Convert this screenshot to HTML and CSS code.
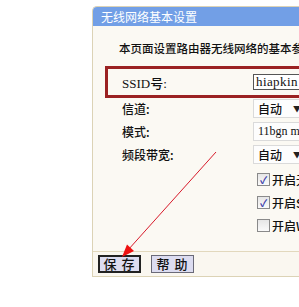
FILE: index.html
```html
<!DOCTYPE html>
<html>
<head>
<meta charset="utf-8">
<link rel="stylesheet" href="styles.css">
</head>
<body>
<div class="panel">
  <div class="hd">无线网络基本设置</div>
  <div class="bd">
    <p class="intro">本页面设置路由器无线网络的基本参数以及安全认证选项。</p>
    <div class="ssid">
      <span class="lbl ser">SSID号:</span>
      <span class="input ser">hiapkin</span>
    </div>
    <div class="rows">
      <div class="row"><span class="lbl">信道:</span><span class="sel">自动<i class="caret">▼</i></span></div>
      <div class="row"><span class="lbl">模式:</span><span class="sel wide ser">11bgn mixed<i class="caret">▼</i></span></div>
      <div class="row"><span class="lbl">频段带宽:</span><span class="sel">自动<i class="caret">▼</i></span></div>
    </div>
    <div class="checks">
      <div class="chk"><span class="box on">✓</span>开启无线功能</div>
      <div class="chk"><span class="box on">✓</span>开启SSID广播</div>
      <div class="chk"><span class="box"></span>开启WDS</div>
    </div>
  </div>
  <div class="ft">
    <button class="btn focus">保 存</button>
    <button class="btn">帮 助</button>
  </div>
</div>
<svg class="arrow" width="299" height="307" viewBox="0 0 299 307">
  <line x1="216" y1="152" x2="128" y2="250" stroke="#d81a2a" stroke-width="1"/>
  <polygon points="122,257 134,251 127,244.5" fill="#ee1111"/>
</svg>
</body>
</html>
```

FILE: styles.css
```css
html, body {
  margin: 0;
  padding: 0;
  width: 299px;
  height: 307px;
  overflow: hidden;
  background: #ffffff;
}
body {
  position: relative;
  box-sizing: border-box;
  padding-top: 6px;
  font-family: "Noto Sans CJK SC", sans-serif;
  font-size: 12px;
  font-weight: 500;
  color: #111;
}
.ser {
  font-family: "Liberation Serif", "Noto Sans CJK SC", serif;
}
.panel {
  margin-left: 92px;
  width: 320px;
  border: 1px solid #dcd3b6;
  border-right: none;
  border-radius: 5px 0 0 0;
  background: #fbf9f3;
}
.hd {
  height: 19px;
  line-height: 19px;
  padding-left: 8px;
  color: #fff;
  font-weight: 400;
  background: #729fe6;
  border-radius: 4px 0 0 0;
  white-space: nowrap;
}
.bd {
  padding-bottom: 14px;
}
.intro {
  margin: 14px 0 0 0;
  padding-left: 26px;
  line-height: 16px;
  height: 16px;
  white-space: nowrap;
  font-size: 11.5px;
}
.ssid {
  margin: 10px 0 0 12px;
  height: 26px;
  border: 3px solid #9b2222;
  display: flex;
  align-items: center;
  padding-left: 14px;
  white-space: nowrap;
}
.ssid .lbl {
  width: 131px;
  font-size: 13px;
}
.input {
  height: 14px;
  line-height: 14px;
  width: 80px;
  border: 1px solid #555;
  border-right: none;
  background: #fff;
  padding-left: 2px;
  font-size: 13px;
  letter-spacing: 0.4px;
  font-weight: 400;
  color: #111;
}
.rows {
  margin-top: -1px;
  padding-left: 29px;
}
.row {
  height: 23px;
  display: grid;
  grid-template-columns: 131px auto;
  align-items: center;
  white-space: nowrap;
}
.sel {
  display: inline-flex;
  align-items: center;
  height: 19px;
  width: 48px;
  box-sizing: border-box;
  border: 1px solid #dadada;
  border-right: none;
  background: #fdfdfd;
  padding-left: 4px;
}
.sel.wide {
  width: 90px;
  font-size: 12px;
  font-weight: 400;
}
.caret {
  font-style: normal;
  font-size: 8px;
  margin-left: 11px;
  color: #222;
}
.checks {
  margin-top: 2px;
  padding-left: 164px;
}
.chk {
  height: 23px;
  display: flex;
  align-items: center;
  white-space: nowrap;
}
.box {
  width: 11px;
  height: 11px;
  border: 1px solid #8a8a8a;
  background: linear-gradient(#e6e6e6, #fafafa);
  margin-right: 2px;
  display: flex;
  align-items: center;
  justify-content: center;
  font-size: 10px;
  line-height: 1;
  color: #3a3aa8;
  font-weight: bold;
}
.ft {
  border-top: 1px solid #e2d8bd;
  height: 25px;
  box-sizing: border-box;
  padding: 3px 0 0 5px;
  display: flex;
  gap: 10px;
  align-items: flex-start;
  background: #faf7f0;
}
.btn {
  width: 43px;
  height: 18px;
  padding: 0;
  margin: 0;
  box-sizing: border-box;
  background: #dcdcf0;
  border: 1px solid #6a6a78;
  font-family: "Noto Sans CJK SC", sans-serif;
  font-size: 13px;
  font-weight: 500;
  letter-spacing: 1px;
  line-height: 14px;
  color: #111;
}
.btn.focus {
  border: 2px solid #222;
}
.arrow {
  position: absolute;
  top: 0;
  left: 0;
  pointer-events: none;
}
```
